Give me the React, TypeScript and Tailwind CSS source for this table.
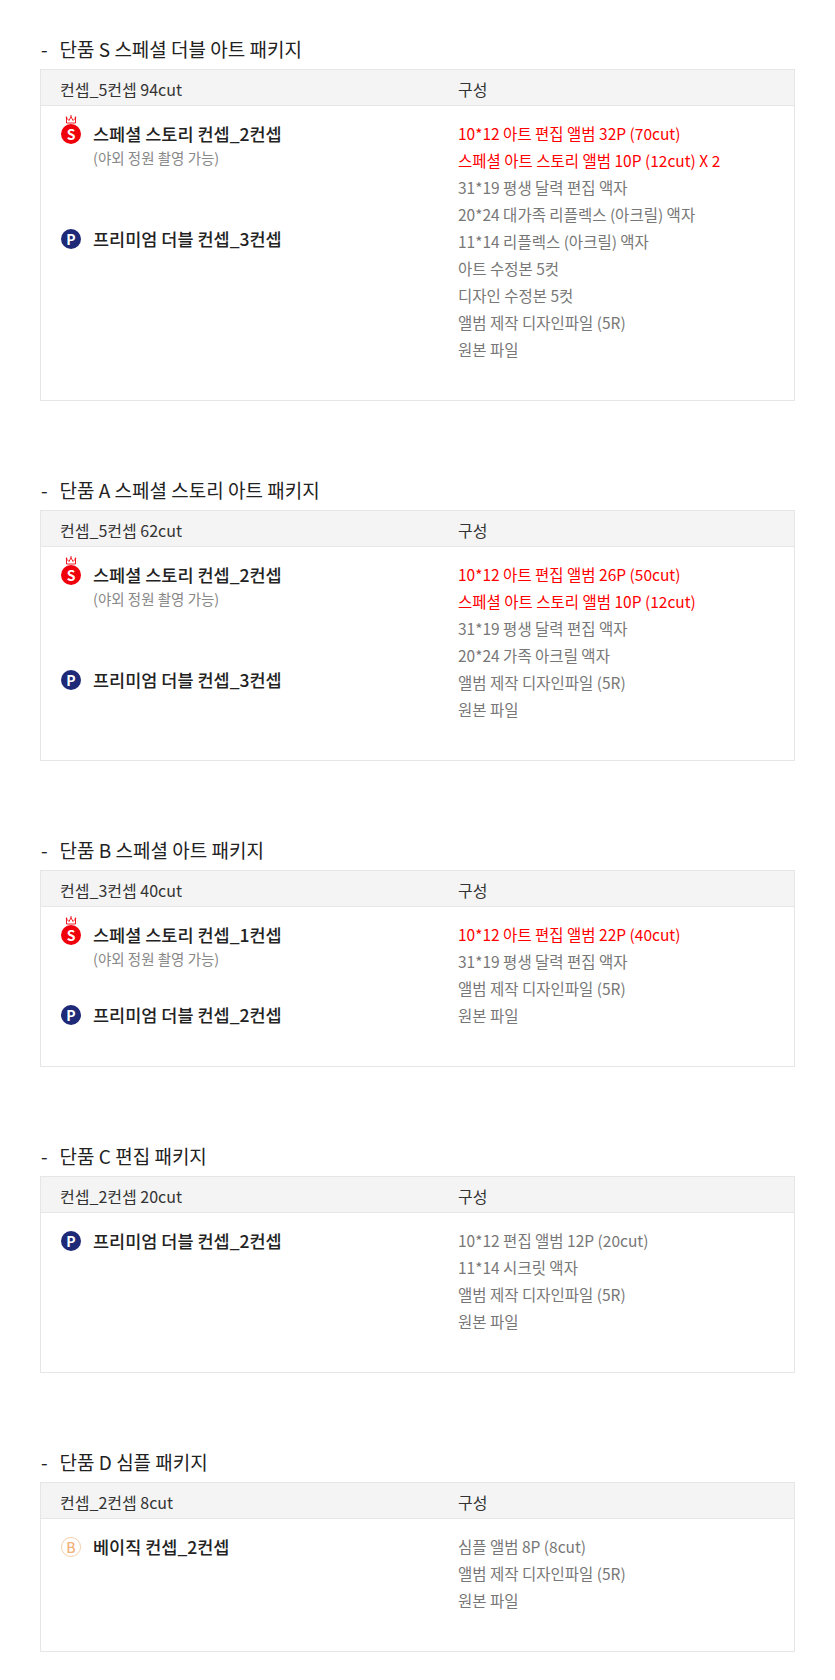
import React from 'react';

type Item = { icon: 'S' | 'P' | 'B'; name: string; sub?: string; gap?: string };
type Line = { text: string; red?: boolean };
type Pack = { title: string; cut: string; items: Item[]; lines: Line[] };

const packs: Pack[] = [
  {
    title: '단품 S 스페셜 더블 아트 패키지',
    cut: '컨셉_5컨셉 94cut',
    items: [
      { icon: 'S', name: '스페셜 스토리 컨셉_2컨셉', sub: '(야외 정원 촬영 가능)' },
      { icon: 'P', name: '프리미엄 더블 컨셉_3컨셉', gap: 'mt-[56px]' },
    ],
    lines: [
      { text: '10*12 아트 편집 앨범 32P (70cut)', red: true },
      { text: '스페셜 아트 스토리 앨범 10P (12cut) X 2', red: true },
      { text: '31*19 평생 달력 편집 액자' },
      { text: '20*24 대가족 리플렉스 (아크릴) 액자' },
      { text: '11*14 리플렉스 (아크릴) 액자' },
      { text: '아트 수정본 5컷' },
      { text: '디자인 수정본 5컷' },
      { text: '앨범 제작 디자인파일 (5R)' },
      { text: '원본 파일' },
    ],
  },
  {
    title: '단품 A 스페셜 스토리 아트 패키지',
    cut: '컨셉_5컨셉 62cut',
    items: [
      { icon: 'S', name: '스페셜 스토리 컨셉_2컨셉', sub: '(야외 정원 촬영 가능)' },
      { icon: 'P', name: '프리미엄 더블 컨셉_3컨셉', gap: 'mt-[56px]' },
    ],
    lines: [
      { text: '10*12 아트 편집 앨범 26P (50cut)', red: true },
      { text: '스페셜 아트 스토리 앨범 10P (12cut)', red: true },
      { text: '31*19 평생 달력 편집 액자' },
      { text: '20*24 가족 아크릴 액자' },
      { text: '앨범 제작 디자인파일 (5R)' },
      { text: '원본 파일' },
    ],
  },
  {
    title: '단품 B 스페셜 아트 패키지',
    cut: '컨셉_3컨셉 40cut',
    items: [
      { icon: 'S', name: '스페셜 스토리 컨셉_1컨셉', sub: '(야외 정원 촬영 가능)' },
      { icon: 'P', name: '프리미엄 더블 컨셉_2컨셉', gap: 'mt-[31px]' },
    ],
    lines: [
      { text: '10*12 아트 편집 앨범 22P (40cut)', red: true },
      { text: '31*19 평생 달력 편집 액자' },
      { text: '앨범 제작 디자인파일 (5R)' },
      { text: '원본 파일' },
    ],
  },
  {
    title: '단품 C 편집 패키지',
    cut: '컨셉_2컨셉 20cut',
    items: [{ icon: 'P', name: '프리미엄 더블 컨셉_2컨셉' }],
    lines: [
      { text: '10*12 편집 앨범 12P (20cut)' },
      { text: '11*14 시크릿 액자' },
      { text: '앨범 제작 디자인파일 (5R)' },
      { text: '원본 파일' },
    ],
  },
  {
    title: '단품 D 심플 패키지',
    cut: '컨셉_2컨셉 8cut',
    items: [{ icon: 'B', name: '베이직 컨셉_2컨셉' }],
    lines: [
      { text: '심플 앨범 8P (8cut)' },
      { text: '앨범 제작 디자인파일 (5R)' },
      { text: '원본 파일' },
    ],
  },
];

const Badge: React.FC<{ kind: Item['icon'] }> = ({ kind }) => {
  if (kind === 'S') {
    return (
      <span className="relative flex size-[20px] shrink-0 items-center justify-center rounded-full bg-[#f0000a] text-[14px] font-bold leading-none text-white">
        {/* little crown on top */}
        <svg className="absolute -top-[9px] left-1/2 -translate-x-1/2" width="13" height="9" viewBox="0 0 13 9" fill="none">
          <path d="M2 8 L2 3 L4.5 5.5 L6.5 1.8 L8.5 5.5 L11 3 L11 8 Z" stroke="#f0000a" strokeWidth="0.9" strokeLinejoin="round" />
          <circle cx="2" cy="2.2" r="0.8" fill="#f0000a" />
          <circle cx="6.5" cy="1" r="0.8" fill="#f0000a" />
          <circle cx="11" cy="2.2" r="0.8" fill="#f0000a" />
        </svg>
        S
      </span>
    );
  }
  if (kind === 'P') {
    return (
      <span className="flex size-[20px] shrink-0 items-center justify-center rounded-full bg-[#1e2a78] text-[14px] font-bold leading-none text-white">
        P
      </span>
    );
  }
  return (
    <span className="flex size-[20px] shrink-0 items-center justify-center rounded-full border border-[#f6cfaa] text-[14px] leading-none text-[#f2b27c]">
      B
    </span>
  );
};

export default function App() {
  return (
    <div
      className="min-h-[1680px] bg-white pt-[34px]"
      style={{ fontFamily: '"Noto Sans CJK KR", "Noto Sans", sans-serif' }}
    >
      {packs.map((p, i) => (
        <section key={p.title} className={`mx-[40px] ${i > 0 ? 'mt-[74px]' : ''}`}>
          <h2 className="mb-[5px] flex text-[19px] leading-[30px] text-[#222]">
            <span className="pl-[1px]">-</span>
            <span className="ml-[12px]">{p.title}</span>
          </h2>
          <div className="border border-[#e6e6e6]">
            <div className="grid h-[36px] grid-cols-[398px_1fr] border-b border-[#e6e6e6] bg-[#f4f4f4] text-[16px] leading-[38px] text-[#333]">
              <div className="pl-[19px]">{p.cut}</div>
              <div className="pl-[19px]">구성</div>
            </div>
            <div className="grid grid-cols-[398px_1fr] pb-[37px] pt-[14px]">
              <div className="pl-[20px]">
                {p.items.map(it => (
                  <div key={it.name} className={it.gap ?? ''}>
                    <div className="flex items-center gap-[12px] text-[17.5px] font-medium leading-[27px] text-[#222]">
                      <Badge kind={it.icon} />
                      <span>{it.name}</span>
                    </div>
                    {it.sub && <p className="pl-[32px] text-[14.5px] leading-[22px] text-[#888]">{it.sub}</p>}
                  </div>
                ))}
              </div>
              <ul className="pl-[19px] text-[15.5px] leading-[27px]">
                {p.lines.map(l => (
                  <li key={l.text} className={l.red ? 'text-[#ff0000]' : 'text-[#777]'}>
                    {l.text}
                  </li>
                ))}
              </ul>
            </div>
          </div>
        </section>
      ))}
    </div>
  );
}
